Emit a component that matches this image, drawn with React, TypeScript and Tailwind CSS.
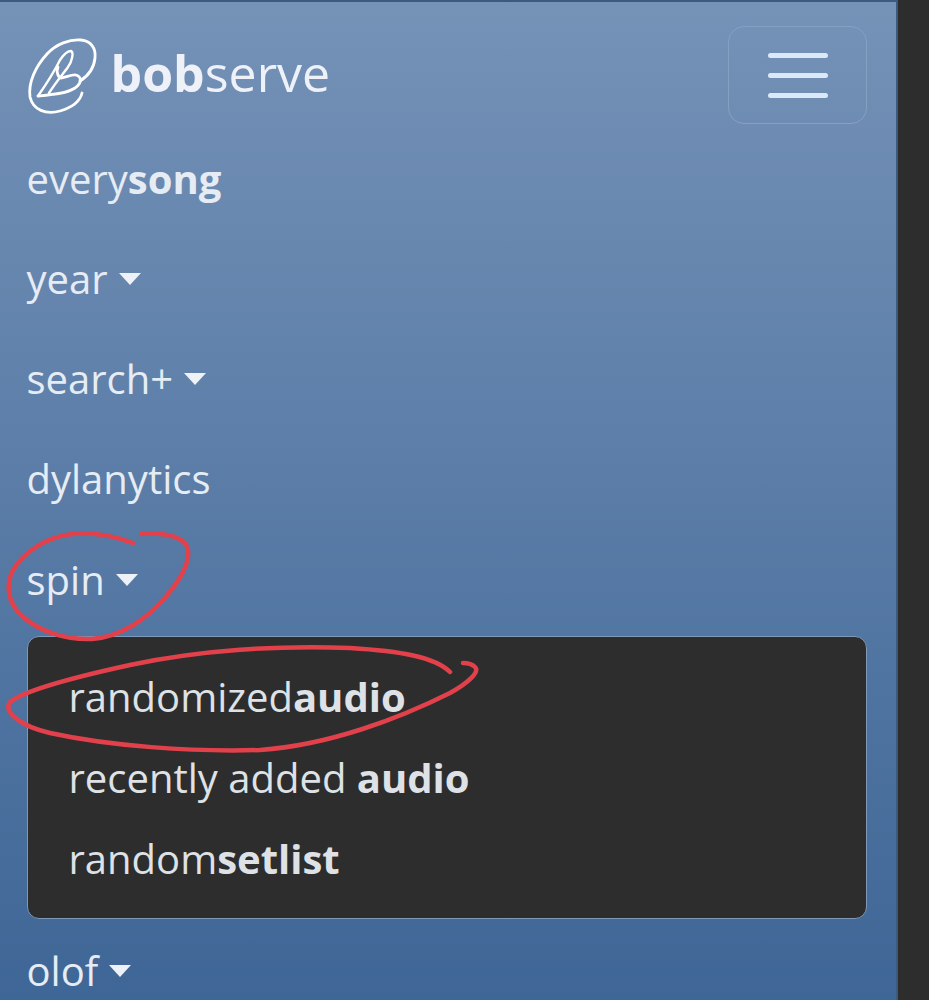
const navItem = "-ml-[0.5px] flex h-[100px] items-center text-[40px] leading-[60px] text-[#e6ecf4]";
const dropItem = "flex h-[81px] items-center px-[40.5px] text-[40px] leading-[60px] text-[#dee2e6]";

function Caret({ className = "" }: { className?: string }) {
  return (
    <span
      className={`inline-block border-x-[11px] border-t-[12px] border-x-transparent border-t-[#eef2f8] ${className}`}
      aria-hidden="true"
    />
  );
}

function Logo() {
  return (
    <svg viewBox="0 0 85 90" className="h-[90px] w-[85px] shrink-0" fill="none" stroke="#ffffff" strokeLinecap="round" strokeLinejoin="round">
      <path
        d="M62 63 C60 72 50 78 40 81 C26 85 13 80 10 67 C8 52 16 36 27 24 C36 14 50 9 61 10 C71 11 76 18 75 28 C74 38 68 46 60 51"
        strokeWidth="2.8"
      />
      <path
        d="M18 66 C25 56 33 44 40 30 C44 24 48 21 51 21 C54 22 52 32 48 37 C43 44 36 52 29 63"
        strokeWidth="2.4"
      />
      <path
        d="M38 37 C36 42 38 47 41 48 C47 47 52 44 56 45 C62 47 62 53 55 58 C46 64 30 65 18 66"
        strokeWidth="2.8"
      />
    </svg>
  );
}

function Annotations() {
  return (
    <svg viewBox="0 0 929 1000" className="pointer-events-none absolute inset-0 h-[1000px] w-[929px]" fill="none" stroke="#e2414b" strokeLinecap="round" strokeLinejoin="round">
      <path
        d="M133 543 C112 535 92 532 72 534 C46 537 24 552 13 570 C5 586 8 603 22 616 C40 632 66 640 92 639 C120 637 145 620 163 600 C178 583 190 565 188 550 C186 537 165 532 141 534"
        strokeWidth="4.5"
      />
      <path
        d="M450 672 C435 657 400 651 350 648 C280 645 200 650 130 665 C75 677 25 690 10 702 C3 712 20 726 50 733 C110 746 190 752 260 750 C330 745 400 718 450 693 C468 683 480 672 475 667 C472 664 468 663 463 663"
        strokeWidth="4.5"
      />
    </svg>
  );
}

export default function App() {
  return (
    <div className="relative flex h-[1000px] w-[929px] overflow-hidden bg-[#2d2d2d] font-['Open_Sans',sans-serif]">
      <nav className="h-full w-[898px] border-t-2 border-r-2 border-[#3a5a80] bg-gradient-to-b from-[#7592b7] to-[#3e6696] px-[27px]">
        <header className="flex h-[127px] items-center justify-between pt-[19px]">
          <a className="-ml-[7px] flex items-center gap-[5.5px] text-[50px] leading-none text-[#eef2f8]">
            <Logo />
            <span className="mb-[4px]">
              <b className="font-bold">bob</b>serve
            </span>
          </a>
          <button className="mr-[2px] flex h-[98px] w-[139px] flex-col items-center justify-center gap-[15px] rounded-2xl border border-[#86a0c1]">
            <span className="h-[5px] w-[60px] rounded-full bg-[#dbe8f6]" />
            <span className="h-[5px] w-[60px] rounded-full bg-[#dbe8f6]" />
            <span className="h-[5px] w-[60px] rounded-full bg-[#dbe8f6]" />
          </button>
        </header>

        <div className={navItem}>
          <span>
            every<b className="font-bold">song</b>
          </span>
        </div>
        <div className={navItem}>
          year
          <Caret className="ml-[11px]" />
        </div>
        <div className={navItem}>
          search+
          <Caret className="ml-[11px]" />
        </div>
        <div className={navItem}>dylanytics</div>
        <div className={`${navItem} mt-px`}>
          spin
          <Caret className="ml-[11px]" />
        </div>

        <div className="mt-[6px] mb-[2px] flex h-[283px] w-[840px] flex-col justify-center rounded-xl border border-[#7f98b8] bg-[#2d2d2d]">
          <div className={dropItem}>
            <span>
              randomized<b className="font-bold">audio</b>
            </span>
          </div>
          <div className={dropItem}>
            <span>
              recently added <b className="font-bold">audio</b>
            </span>
          </div>
          <div className={dropItem}>
            <span>
              random<b className="font-bold">setlist</b>
            </span>
          </div>
        </div>

        <div className={navItem}>
          olof
          <Caret className="ml-[11px]" />
        </div>
      </nav>
      <Annotations />
    </div>
  );
}
